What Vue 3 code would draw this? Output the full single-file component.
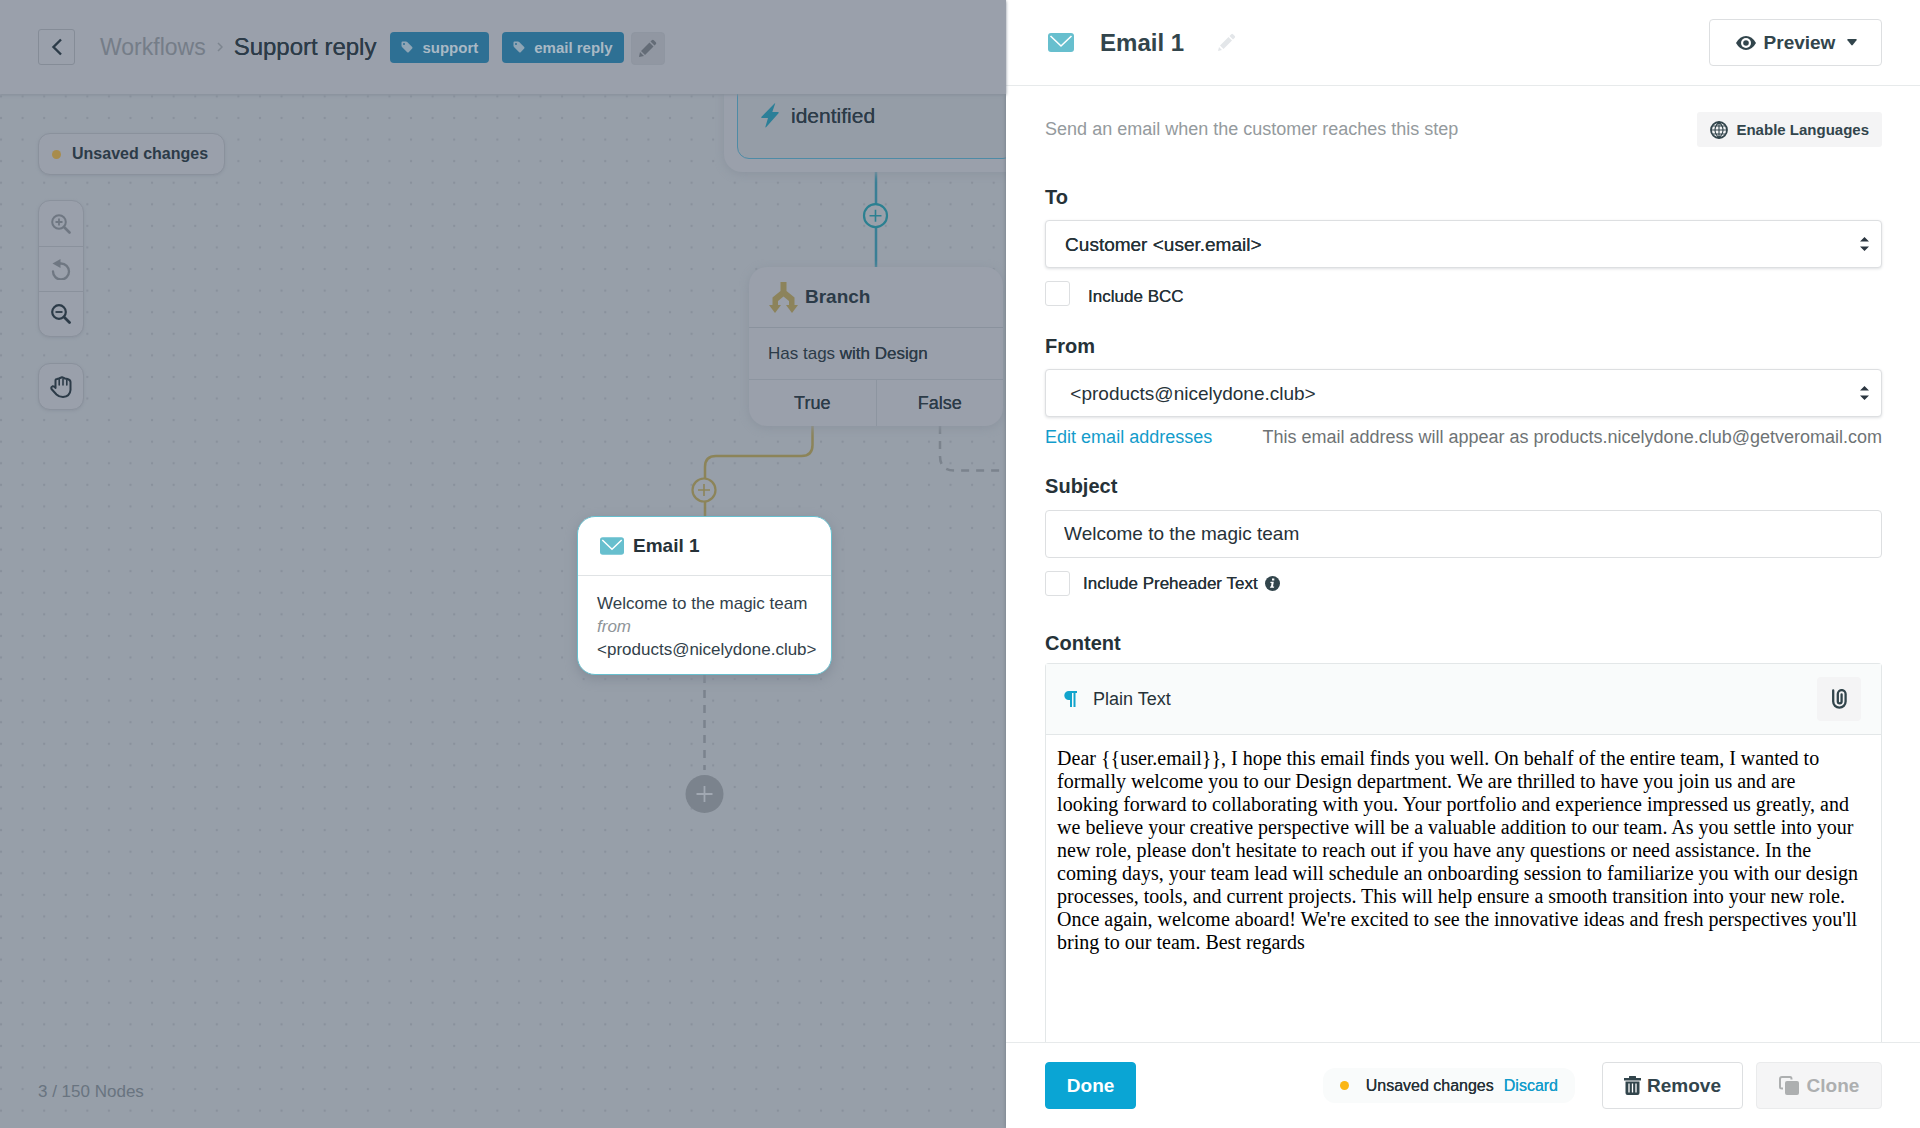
<script setup>
import { ref } from 'vue'

const tags = ['support', 'email reply']
const recipient = ref('customer')
const sender = ref('products')
const subject = ref('Welcome to the magic team')
const includeBcc = ref(false)
const includePreheader = ref(false)
const content = ref(
  [
    'Dear {{user.email}}, I hope this email finds you well. On behalf of the entire team, I wanted to',
    'formally welcome you to our Design department. We are thrilled to have you join us and are',
    'looking forward to collaborating with you. Your portfolio and experience impressed us greatly, and',
    'we believe your creative perspective will be a valuable addition to our team. As you settle into your',
    "new role, please don't hesitate to reach out if you have any questions or need assistance. In the",
    'coming days, your team lead will schedule an onboarding session to familiarize you with our design',
    'processes, tools, and current projects. This will help ensure a smooth transition into your new role.',
    "Once again, welcome aboard! We're excited to see the innovative ideas and fresh perspectives you'll",
    'bring to our team. Best regards'
  ].join('\n')
)
</script>

<template>
  <div class="app">
    <main class="workspace">
      <header class="topbar">
        <button class="back" type="button" aria-label="Back">
          <svg width="12" height="18" viewBox="0 0 12 18"><path d="M10 1.500 2.500 9l7.500 7.500" fill="none" stroke="#2c3b48" stroke-width="2.400" /></svg>
        </button>
        <nav class="crumbs">
          <a href="#">Workflows</a>
          <svg width="6" height="10" viewBox="0 0 6 10"><path d="M1 1l4 4-4 4" fill="none" stroke="#7d858f" stroke-width="1.500" /></svg>
          <h1>Support reply</h1>
        </nav>
        <ul class="tags">
          <li v-for="tag in tags" :key="tag">
            <svg width="12" height="12" viewBox="0 0 12 12"><path fill-rule="evenodd" d="M.5 1.500Q.5.5 1.500.5H5q.7 0 1.200.5l5 5q.7.800 0 1.500L7.700 11.200q-.7.700-1.500 0l-5-5Q.5 5.600.5 5zM3 2a1 1 0 1 0 0 2 1 1 0 0 0 0-2z" fill="#8fa5b5" /></svg>
            {{ tag }}
          </li>
        </ul>
        <button class="edit-tags" type="button" aria-label="Edit tags">
          <svg width="19" height="19" viewBox="0 0 19 19" fill="#646c77"><path d="M1 18l1-5 4 4zM3 12l8.500-8.500 4 4L7 16zM12.500 2.500l1.300-1.300q1-1 2 0l2 2q1 1 0 2l-1.300 1.300z" /></svg>
        </button>
      </header>

      <section class="canvas">
        <svg class="wires" width="100%" height="100%" fill="none">
          <defs>
            <pattern id="dots" x="-9.800" y="-8.400" width="21.580" height="21.580" patternUnits="userSpaceOnUse">
              <circle cx="10.800" cy="10.800" r="1.200" fill="#89919c" />
            </pattern>
          </defs>
          <rect width="100%" height="100%" fill="url(#dots)" />
          <path d="M876 78V173" stroke="#3a7f95" stroke-width="2.500" />
          <path d="M812.500 331V351q0 11-11 11H716q-11 0-11 11V422" stroke="#8c8459" stroke-width="2.500" />
          <path d="M940 332V362q0 14.500 14.500 14.500H1300M704.500 581V676" stroke="#7b838d" stroke-width="2.500" stroke-dasharray="8 7" />
          <circle cx="875.500" cy="121.700" r="11.500" fill="#99a0aa" stroke="#2c8091" stroke-width="2.200" />
          <path d="M869.500 121.700h12m-6-6v12" stroke="#2c8091" stroke-width="1.600" />
          <circle cx="704" cy="396" r="11.500" fill="#99a0aa" stroke="#8c8459" stroke-width="2.200" />
          <path d="M698 396h12m-6-6v12" stroke="#8c8459" stroke-width="1.600" />
          <circle cx="704.500" cy="700" r="19" fill="#7b838d" />
          <path d="M696.500 700h16m-8-8v16" stroke="#a1a8b2" stroke-width="1.800" />
        </svg>

        <article class="node trigger">
          <div class="trigger-inner">
            <svg width="18" height="25" viewBox="0 0 18 25"><path d="M13.500.500Q14.500-.2 14 1L11.300 9H17q1.200.2.500 1.200L5.300 24Q4 25 4.500 23.500L7 15H1Q-.3 14.700.500 13.700z" fill="#2c7f98" /></svg>
            identified
          </div>
        </article>

        <article class="node branch">
          <h2>
            <svg width="29" height="31" viewBox="0 0 29 31"><path d="M11.500 0h6v9l8 6.500V23H29l-6 8-6-8h3v-4l-5.500-4.500L9 19v4h3l-6 8-6-8h3.500v-7.500l8-6.500z" fill="#8c835b" /></svg>
            Branch
          </h2>
          <p>Has tags <span class="medium">with Design</span></p>
          <div class="outcomes"><span>True</span><span>False</span></div>
        </article>

        <article class="node email">
          <h2>
            <svg width="24" height="18" viewBox="0 0 26 19"><rect width="26" height="19" rx="3" fill="#67bfce" /><path d="M2.500 3 13 13 23.500 3" fill="none" stroke="#fff" stroke-width="1.600" /></svg>
            Email 1
          </h2>
          <p>Welcome to the magic team<br /><em>from</em><br />&lt;products@nicelydone.club&gt;</p>
        </article>

        <div class="controls">
          <div class="unsaved"><i></i>Unsaved changes</div>
          <div class="tool-group">
            <button type="button" aria-label="Zoom in" disabled>
              <svg width="20" height="20" viewBox="0 0 20 20" fill="none" stroke="currentColor"><circle cx="8" cy="8" r="6.800" stroke-width="2" /><path d="M13 13l5.500 5.500" stroke-width="2.600" stroke-linecap="round" /><path d="M8 4.500v7M4.500 8h7" stroke-width="1.800" /></svg>
            </button>
            <button type="button" aria-label="Reset zoom" disabled>
              <svg width="20" height="21" viewBox="0 0 20 21"><path d="M2 12.500A8 8 0 1 0 10 4.500H7" fill="none" stroke="currentColor" stroke-width="2.300" stroke-linecap="round" /><path d="M1.500 4.500 9.500 0v9z" fill="currentColor" /></svg>
            </button>
            <button type="button" aria-label="Zoom out">
              <svg width="20" height="20" viewBox="0 0 20 20" fill="none" stroke="currentColor"><circle cx="8" cy="8" r="6.800" stroke-width="2.200" /><path d="M13 13l5.500 5.500" stroke-width="2.800" stroke-linecap="round" /><path d="M4.500 8h7" stroke-width="1.800" /></svg>
            </button>
          </div>
          <div class="tool-group">
            <button type="button" aria-label="Pan">
              <svg width="22" height="22" viewBox="0 0 22 22" fill="none" stroke="currentColor" stroke-width="2" stroke-linejoin="round" stroke-linecap="round"><path d="M5.500 12V4.500Q5.500 3 7 3L8.800 2.500 12 1.200 15 2.500 17.500 3 Q20.500 4 20.500 6V14Q20 20.500 13 21 9 21 6.500 18.500L1.500 13Q.8 11 2.500 10.300 4 10 5.500 12Z" /><path d="M9.200 3.500V9M13 3V9M16.800 4V9" stroke-width="1.600" /></svg>
            </button>
          </div>
          <p class="node-count">3 / 150 Nodes</p>
        </div>
      </section>
    </main>

    <aside class="panel">
      <header class="panel-head">
        <svg width="26" height="19" viewBox="0 0 26 19"><rect width="26" height="19" rx="3" fill="#67bfce" /><path d="M2.500 3 13 13 23.500 3" fill="none" stroke="#fff" stroke-width="1.600" /></svg>
        <h2>Email 1</h2>
        <button class="rename" type="button" aria-label="Rename">
          <svg width="19" height="19" viewBox="0 0 19 19" fill="#e3e6e9"><path d="M1 18l1-4 3 3zM3 12.500l8.500-8.500 3.500 3.500L6.500 16zM12.500 3l1.800-1.800q.8-.8 1.700 0l1.800 1.800q.8.800 0 1.700L16 6.500z" /></svg>
        </button>
        <button class="btn preview" type="button">
          <svg width="20" height="14" viewBox="0 0 20 14"><path d="M0 7Q4 0 10 0t10 7q-4 7-10 7T0 7z" fill="#32454c" /><circle cx="10" cy="7" r="5" fill="#fff" /><circle cx="10" cy="7" r="2.800" fill="#32454c" /></svg>
          Preview
          <svg class="caret" width="10" height="7" viewBox="0 0 10 7"><path d="M1 0h8q1.300 0 .5 1.200L5.700 6q-.7.800-1.400 0L.5 1.200Q-.3 0 1 0z" fill="#32454c" /></svg>
        </button>
      </header>

      <form class="panel-body" @submit.prevent>
        <div class="intro">
          <p>Send an email when the customer reaches this step</p>
          <button class="languages" type="button">
            <svg width="18" height="18" viewBox="0 0 18 18" fill="none" stroke="#32454c"><circle cx="9" cy="9" r="8" stroke-width="1.800" /><path d="M9 1v16M1 9h16M2.500 5h13M2.500 13h13M9 1q-8 8 0 16M9 1q8 8 0 16" stroke-width="1.100" /></svg>
            Enable Languages
          </button>
        </div>

        <label class="title" for="to">To</label>
        <div class="select medium">
          <select id="to" v-model="recipient"><option value="customer">Customer &lt;user.email&gt;</option></select>
          <svg width="9" height="14" viewBox="0 0 9 14"><path d="M4.500 0 9 4.500H0zM4.500 14 0 9.500h9z" fill="#2b3640" /></svg>
        </div>
        <div class="check bcc">
          <input id="bcc" v-model="includeBcc" type="checkbox" />
          <label for="bcc" class="medium">Include BCC</label>
        </div>

        <label class="title from" for="from">From</label>
        <div class="select">
          <select id="from" v-model="sender"><option value="products">&nbsp;&lt;products@nicelydone.club&gt;</option></select>
          <svg width="9" height="14" viewBox="0 0 9 14"><path d="M4.500 0 9 4.500H0zM4.500 14 0 9.500h9z" fill="#2b3640" /></svg>
        </div>
        <div class="hint">
          <a href="#">Edit email addresses</a>
          <span>This email address will appear as products.nicelydone.club@getveromail.com</span>
        </div>

        <label class="title subject" for="subject">Subject</label>
        <input id="subject" v-model="subject" class="text-input" type="text" />
        <div class="check">
          <input id="preheader" v-model="includePreheader" type="checkbox" />
          <label for="preheader" class="medium">Include Preheader Text</label>
          <svg width="15" height="15" viewBox="0 0 15 15"><circle cx="7.500" cy="7.500" r="7.500" fill="#32454c" /><path d="M7 2.500h2.300v2H7zM5.500 5.800h3.300L8 10.500h1.200l-.2 1.300H5l.2-1.300h.8l.5-3.400H5.300z" fill="#fff" /></svg>
        </div>

        <label class="title content-title" for="content">Content</label>
        <div class="editor">
          <div class="editor-bar">
            <svg width="13" height="16" viewBox="0 0 13 16"><path d="M4.800 0H13v2h-1.500v14h-2V2H8v14H6V9H4.800a4.500 4.500 0 0 1 0-9z" fill="#12a4cc" /></svg>
            <span>Plain Text</span>
            <button type="button" aria-label="Attach file">
              <svg width="15" height="20" viewBox="0 0 15 20" fill="none" stroke="#32454c" stroke-width="2.300" stroke-linecap="round"><path d="M1.200 1.500V12.500a6.200 6.200 0 0 0 12.400 0V5a3.900 3.900 0 0 0-7.800 0v7.500a1.900 1.900 0 0 0 3.800 0V5.500" /></svg>
            </button>
          </div>
          <textarea id="content" v-model="content" spellcheck="false"></textarea>
        </div>
      </form>

      <footer class="panel-foot">
        <button class="btn done" type="button">Done</button>
        <div class="status"><i></i><span class="medium">Unsaved changes</span><a href="#" class="medium">Discard</a></div>
        <button class="btn remove" type="button">
          <svg width="17" height="19" viewBox="0 0 17 19"><path d="M0 2h5V.500Q5 0 5.500 0h6q.5 0 .5.500V2h5v2.500H0zM1.500 5.500h14V17q0 2-2 2h-10q-2 0-2-2z" fill="#32454c" /><path d="M5 7.500v9M8.500 7.500v9M12 7.500v9" stroke="#fff" stroke-width="1.300" /></svg>
          Remove
        </button>
        <button class="btn clone" type="button" disabled>
          <svg width="20" height="19" viewBox="0 0 20 19"><path d="M4 12.500H3q-2 0-2-1.500V3q0-2 2-2h8q1.500 0 1.500 2v.5" fill="none" stroke="#adafb0" stroke-width="2" /><rect x="6" y="5" width="14" height="14" rx="2" fill="#adafb0" /></svg>
          Clone
        </button>
      </footer>
    </aside>
  </div>
</template>

<style>
body {
  margin: 0;
}
</style>

<style scoped>
* {
  box-sizing: border-box;
}
.app {
  display: flex;
  height: 100vh;
  font-family: "Liberation Sans", Arial, sans-serif;
  font-size: 18px;
  color: #263238;
  background: #fff;
}
h1, h2, p, ul {
  margin: 0;
  padding: 0;
}
button, select, input, textarea {
  font: inherit;
  color: inherit;
}
button {
  display: flex;
  align-items: center;
  justify-content: center;
  padding: 0;
}
a {
  text-decoration: none;
  color: #139ccb;
}
svg {
  flex: none;
}
.medium {
  text-shadow: 0 0 0 currentColor;
}

.workspace {
  flex: 1;
  min-width: 0;
  display: flex;
  flex-direction: column;
  color: #2c3b48;
  background: #979fa9;
}
.topbar {
  position: relative;
  z-index: 1;
  display: flex;
  align-items: center;
  height: 94px;
  padding-left: 38px;
  background: #9aa0ab;
  box-shadow: 0 1px 3px #858d98;
}
.back {
  width: 37px;
  height: 36px;
  background: none;
  border: 1px solid #858c97;
  border-radius: 3px;
}
.crumbs {
  display: flex;
  align-items: center;
  gap: 11px;
  margin: 0 14px 0 25px;
  font-size: 24px;
}
.crumbs a {
  font-size: 23px;
  color: #757d88;
}
.crumbs h1 {
  font-size: 24px;
  font-weight: 400;
  text-shadow: 0 0 0 currentColor;
}
.tags {
  display: flex;
  gap: 13px;
  list-style: none;
}
.tags li {
  display: flex;
  align-items: center;
  gap: 9px;
  height: 31px;
  padding: 0 11px;
  border-radius: 4px;
  background: #2e7094;
  color: #a9b9c5;
  font-size: 15px;
  font-weight: 700;
}
.edit-tags {
  width: 34px;
  height: 33px;
  margin: 3px 0 0 7px;
  border: 1px solid #8f96a1;
  border-radius: 4px;
  background: #9197a2;
}
.canvas {
  position: relative;
  flex: 1;
  overflow: hidden;
}
.wires {
  position: absolute;
  inset: 0;
}
.controls {
  position: relative;
  display: flex;
  flex-direction: column;
  align-items: flex-start;
  height: 100%;
  padding: 39px 38px 26px;
}
.unsaved {
  display: flex;
  align-items: center;
  height: 42px;
  padding: 0 16px 0 13px;
  margin-bottom: 25px;
  border: 1px solid #8a919c;
  border-radius: 12px;
  background: #9aa0ab;
  box-shadow: 0 1px 3px #8c949f;
  font-size: 16px;
  font-weight: 700;
}
.unsaved i {
  width: 9px;
  height: 9px;
  margin-right: 11px;
  border-radius: 50%;
  background: #a88c4c;
}
.tool-group {
  width: 46px;
  margin-bottom: 26px;
  border: 1px solid #8a919c;
  border-radius: 12px;
  background: #9aa0ab;
  box-shadow: 0 1px 3px #8c949f;
}
.tool-group button {
  width: 100%;
  height: 45px;
  border: 0;
  background: none;
  color: #2c3b48;
}
.tool-group button + button {
  border-top: 1px solid #8a919c;
}
.tool-group button:disabled {
  color: #6f7782;
}
.node-count {
  margin-top: auto;
  font-size: 17px;
  line-height: 20px;
  color: #697480;
}

.node {
  position: absolute;
  background: #9aa0ab;
  border-radius: 18px;
  box-shadow: 0 2px 10px #8c949f;
}
.node h2 {
  display: flex;
  align-items: center;
  gap: 7px;
  height: 60px;
  padding-left: 20px;
  font-size: 19px;
  font-weight: 700;
}
.trigger {
  left: 724px;
  top: -40px;
  width: 304px;
  height: 118px;
  padding: 0 13px 13px;
}
.trigger-inner {
  display: flex;
  align-items: center;
  gap: 12px;
  height: 105px;
  padding: 18px 0 0 23px;
  border: 1px solid #4e8ba6;
  border-radius: 12px;
  background: #959da7;
  font-size: 21px;
  text-shadow: 0 0 0 currentColor;
}
.branch {
  left: 749px;
  top: 173px;
  width: 254px;
}
.branch p {
  padding: 0 19px;
  border-top: 1px solid #8a929d;
  border-bottom: 1px solid #8d95a0;
  font-size: 17px;
  line-height: 51px;
}
.outcomes {
  display: flex;
  font-size: 18px;
  line-height: 46px;
  text-align: center;
  text-shadow: 0 0 0 currentColor;
}
.outcomes span {
  flex: 1;
}
.outcomes span + span {
  border-left: 1px solid #8d95a0;
}
.email {
  left: 577px;
  top: 422px;
  width: 255px;
  background: #fff;
  border: 1px solid #67bfce;
  box-shadow: 0 4px 12px #848c98;
  color: #263238;
}
.email h2 {
  gap: 9px;
  height: 58px;
  padding-left: 22px;
}
.email p {
  padding: 16px 0 13px 19px;
  border-top: 1px solid #e0e3e5;
  font-size: 17px;
  line-height: 23px;
  white-space: nowrap;
  color: #32414a;
}
.email em {
  color: #8f9599;
}

.panel {
  display: flex;
  flex-direction: column;
  width: 47.6%;
  min-width: 0;
  position: relative;
  background: #fff;
  box-shadow: 0 0 4px #727a86;
}
.panel-head {
  display: flex;
  align-items: center;
  flex: none;
  height: 86px;
  padding: 0 38px 0 42px;
  border-bottom: 1px solid #e7eaeb;
}
.panel-head h2 {
  margin: 0 33px 0 26px;
  font-size: 24px;
  color: #32454c;
}
.rename {
  border: 0;
  background: none;
}
.btn {
  height: 47px;
  border: 1px solid #dddfe1;
  border-radius: 4px;
  background: #fff;
  font-size: 19px;
  font-weight: 700;
  color: #32454c;
}
.preview {
  width: 173px;
  gap: 8px;
  margin-left: auto;
  padding-left: 2px;
}
.caret {
  margin-left: 4px;
}
.panel-body {
  display: flex;
  flex-direction: column;
  flex: 1;
  min-height: 0;
  padding: 26px 38px 0 39px;
  overflow: hidden;
}
.intro {
  display: flex;
  align-items: center;
  justify-content: space-between;
  margin-bottom: 38px;
  color: #949a9d;
}
.languages {
  gap: 8px;
  height: 35px;
  padding: 0 13px;
  border: 0;
  border-radius: 3px;
  background: #f4f4f5;
  font-size: 15px;
  font-weight: 700;
  color: #32454c;
}
.title {
  flex: none;
  margin-bottom: 11px;
  font-size: 20px;
  font-weight: 700;
  line-height: 24px;
}
.title.from {
  margin-top: 28px;
}
.title.subject {
  margin: 25px 0 12px;
}
.title.content-title {
  margin: 35px 0 8px;
}
.select {
  position: relative;
  flex: none;
}
.select select,
.text-input {
  display: block;
  flex: none;
  width: 100%;
  height: 48px;
  padding: 0 19px;
  border: 1px solid #dddfe1;
  border-radius: 4px;
  background: #fff;
  font-size: 19px;
}
.select select {
  appearance: none;
  text-shadow: inherit;
  box-shadow: 0 1px 3px #dfe1e3;
}
.select svg {
  position: absolute;
  right: 13px;
  top: 17px;
  pointer-events: none;
}
.text-input {
  padding: 0 18px;
}
.check {
  display: flex;
  align-items: center;
  gap: 13px;
  flex: none;
  margin-top: 13px;
  font-size: 17px;
  line-height: 19px;
}
.check input {
  appearance: none;
  width: 25px;
  height: 25px;
  margin: 0;
  border: 1px solid #dddfe1;
  border-radius: 3px;
  background: #fff;
}
.check svg {
  margin-left: -6px;
}
.check.bcc {
  align-items: flex-end;
  gap: 18px;
}
.hint {
  display: flex;
  justify-content: space-between;
  margin-top: 8px;
  line-height: 24px;
  white-space: nowrap;
  color: #6e7375;
}
.editor {
  display: flex;
  flex-direction: column;
  flex: 1;
  min-height: 0;
  border: 1px solid #e3e7e8;
  border-bottom: 0;
  border-radius: 4px 4px 0 0;
}
.editor-bar {
  display: flex;
  align-items: center;
  flex: none;
  gap: 16px;
  height: 71px;
  padding: 0 20px 0 18px;
  border-bottom: 1px solid #e3e7e8;
  background: #f9fbfb;
}
.editor-bar button {
  width: 44px;
  height: 44px;
  margin-left: auto;
  border: 0;
  border-radius: 4px;
  background: #f4f4f5;
}
.editor textarea {
  flex: 1;
  padding: 12px 8px 8px 11px;
  border: 0;
  outline: 0;
  resize: none;
  overflow: hidden;
  background: none;
  font-family: "Liberation Serif", "Times New Roman", serif;
  font-size: 20px;
  line-height: 23px;
  color: #000;
}
.panel-foot {
  display: flex;
  align-items: center;
  flex: none;
  height: 86px;
  padding: 0 38px 0 39px;
  border-top: 1px solid #e7eaeb;
}
.done {
  width: 91px;
  border-color: #0aa5d4;
  background: #0aa5d4;
  color: #fff;
}
.status {
  display: flex;
  align-items: center;
  height: 35px;
  margin: 0 27px 0 auto;
  padding: 0 17px;
  border-radius: 12px;
  background: #f9fbfb;
  font-size: 16px;
}
.status i {
  width: 9px;
  height: 9px;
  margin-right: 17px;
  border-radius: 50%;
  background: #fbb615;
}
.status a {
  margin-left: 10px;
}
.remove {
  gap: 6px;
  width: 141px;
  margin-right: 13px;
}
.clone {
  gap: 8px;
  width: 126px;
  border-color: #eaebec;
  background: #f5f5f6;
  color: #adafb0;
}
</style>
